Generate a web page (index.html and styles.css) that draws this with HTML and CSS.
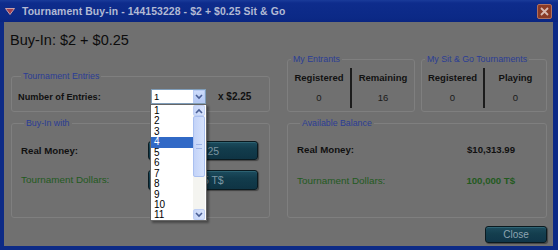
FILE: index.html
```html
<!DOCTYPE html>
<html>
<head>
<meta charset="utf-8">
<link rel="stylesheet" href="styles.css">
</head>
<body>
<div class="window">
  <div class="titlebar">
    <svg class="tb-icon" width="10" height="7" viewBox="0 0 10 7"><path d="M0.5 0.5 L9.5 0.5 L5 6.5 Z" fill="#a04050" stroke="#c8a0a8" stroke-width="1"/></svg>
    <span class="title">Tournament Buy-in - 144153228 - $2 + $0.25 Sit &amp; Go</span>
    <span class="x-btn"><svg width="9" height="9" viewBox="0 0 9 9"><path d="M1 1 L8 8 M8 1 L1 8" stroke="#d8b8b0" stroke-width="1.8"/></svg></span>
  </div>
  <div class="body">
    <div class="cols">
      <div class="col-left">
        <h1 class="buyin-title">Buy-In: $2 + $0.25</h1>
        <fieldset class="grp grp-entries">
          <legend>Tournament Entries</legend>
          <div class="entries-row">
            <span class="lbl-b lbl-entries">Number of Entries:</span>
            <div class="select">
              <span class="sel-value">1</span>
              <span class="sel-arrow"><svg width="8" height="6" viewBox="0 0 8 6"><path d="M1 1 L4 4 L7 1" fill="none" stroke="#4a5f95" stroke-width="1.6"/></svg></span>
              <div class="dd-list">
                <div class="dd-items">
                  <div class="dd-item">1</div>
                  <div class="dd-item">2</div>
                  <div class="dd-item">3</div>
                  <div class="dd-item dd-sel">4</div>
                  <div class="dd-item">5</div>
                  <div class="dd-item">6</div>
                  <div class="dd-item">7</div>
                  <div class="dd-item">8</div>
                  <div class="dd-item">9</div>
                  <div class="dd-item">10</div>
                  <div class="dd-item">11</div>
                </div>
                <div class="dd-scroll">
                  <span class="sb-btn"><svg width="8" height="6" viewBox="0 0 8 6"><path d="M1 5 L4 2 L7 5" fill="none" stroke="#4a5f95" stroke-width="1.6"/></svg></span>
                  <span class="sb-thumb"><span class="grip"></span></span>
                  <span class="sb-track"></span>
                  <span class="sb-btn"><svg width="8" height="6" viewBox="0 0 8 6"><path d="M1 1 L4 4 L7 1" fill="none" stroke="#4a5f95" stroke-width="1.6"/></svg></span>
                </div>
              </div>
            </div>
            <span class="lbl-b mult">x $2.25</span>
          </div>
        </fieldset>
        <fieldset class="grp grp-buyin">
          <legend>Buy-In with</legend>
          <div class="buyin-grid">
            <span class="lbl-b lbl-rm">Real Money:</span>
            <span class="tbtn tbtn-1">$2.25</span>
            <span class="lbl-g">Tournament Dollars:</span>
            <span class="tbtn tbtn-2">2.25 T$</span>
          </div>
        </fieldset>
      </div>
      <div class="col-right">
        <div class="stats-row">
          <fieldset class="grp grp-stats grp-entrants">
            <legend>My Entrants</legend>
            <div class="stat-cols">
              <div class="stat-col stat-first"><span class="stat-h">Registered</span><span class="stat-v">0</span></div>
              <div class="stat-col"><span class="stat-h">Remaining</span><span class="stat-v">16</span></div>
            </div>
          </fieldset>
          <fieldset class="grp grp-stats grp-sng">
            <legend>My Sit &amp; Go Tournaments</legend>
            <div class="stat-cols">
              <div class="stat-col stat-first"><span class="stat-h">Registered</span><span class="stat-v">0</span></div>
              <div class="stat-col"><span class="stat-h">Playing</span><span class="stat-v">0</span></div>
            </div>
          </fieldset>
        </div>
        <fieldset class="grp grp-balance">
          <legend>Available Balance</legend>
          <div class="bal-grid">
            <span class="lbl-b lbl-rm">Real Money:</span>
            <span class="lbl-b bal-v">$10,313.99</span>
            <span class="lbl-g">Tournament Dollars:</span>
            <span class="lbl-g bal-v bal-gb">100,000 T$</span>
          </div>
        </fieldset>
      </div>
    </div>
    <div class="footer">
      <span class="close-btn">Close</span>
    </div>
  </div>
</div>
</body>
</html>
```
FILE: styles.css
```css
* { box-sizing: border-box; }
html, body { margin: 0; padding: 0; background: #0c2a86; }
body { width: 558px; height: 250px; overflow: hidden; font-family: "Liberation Sans", Arial, sans-serif; }

.window { width: 558px; height: 250px; background: #0c2a86; }

.titlebar {
  height: 22px;
  display: flex;
  align-items: center;
  padding: 0 6px 0 5px;
  background: linear-gradient(#1a3b9a 0, #0e2c8c 3px, #0b2986 18px, #0a2580 22px);
}
.tb-icon { margin-right: 7px; flex: none; }
.title { color: #b2bad4; font-weight: bold; font-size: 10.4px; letter-spacing: 0.1px; flex: 1; white-space: nowrap; }
.x-btn {
  width: 15px; height: 15px;
  background: #8a3a26;
  border: 1px solid #b07060;
  border-radius: 2px;
  display: flex; align-items: center; justify-content: center;
}

.body {
  margin: 0 5px 0 4px;
  height: 224px;
  background: #707070;
}

.cols {
  display: grid;
  grid-template-columns: 259px 260px;
  column-gap: 17px;
  padding: 0 0 0 7px;
}

.buyin-title {
  margin: 8px 0 20px -1px;
  font-weight: normal;
  font-size: 14.5px;
  line-height: 20px;
  color: #0c0c0c;
}

.grp {
  margin: 0;
  padding: 0;
  min-inline-size: 0;
  border: 1px solid #7f7f7f;
  border-radius: 3px;
}
.grp legend {
  padding: 0 2px;
  margin-left: 3px;
  font-size: 8.8px;
  line-height: 12px;
  color: #2b3d95;
}

.lbl-b { font-weight: bold; font-size: 9.4px; color: #101010; line-height: 12px; white-space: nowrap; }
.lbl-g { font-size: 9.9px; color: #235a1e; line-height: 12px; white-space: nowrap; }
.lbl-rm { font-size: 9.7px; }

.grp-entries { height: 42px; padding: 7px 0 0 6px; }
.entries-row { display: flex; align-items: center; height: 15px; }
.lbl-entries { width: 133px; font-size: 9.2px; }
.mult { margin-left: 12px; font-size: 10px; }

.select {
  position: relative;
  width: 55px; height: 15px;
  background: #fff;
  border: 1px solid #7f9db9;
  display: flex; align-items: center;
  z-index: 10;
}
.sel-value { flex: 1; padding-left: 2px; font-size: 9.5px; color: #000; line-height: 12px; }
.sel-arrow {
  width: 12px; height: 13px; margin-right: 0;
  background: linear-gradient(#cddcfb, #b4c8f4);
  border: 1px solid #b8cbf3;
  display: flex; align-items: center; justify-content: center;
}

.dd-list {
  position: absolute;
  left: -2px; top: 14px;
  width: 57px; height: 117px;
  background: #fff;
  border: 1px solid #666;
  box-shadow: 2px 2px 2px rgba(0,0,0,0.35);
  display: flex;
}
.dd-items { flex: 1; padding-top: 1px; }
.dd-item { height: 10.45px; line-height: 10.45px; font-size: 10px; padding-left: 3px; color: #000; }
.dd-sel { background: #3169c6; color: #fff; }
.dd-scroll {
  width: 12px;
  margin-right: 1px;
  display: flex; flex-direction: column;
  background: #f4f4f0;
}
.sb-btn {
  height: 11px; flex: none;
  background: linear-gradient(90deg, #c6d5f8, #d8e3fb);
  border: 1px solid #c0d0f4;
  border-radius: 2px;
  display: flex; align-items: center; justify-content: center;
}
.sb-thumb {
  height: 61px; flex: none;
  background: linear-gradient(90deg, #c3d3f8, #d6e2fc);
  border: 1px solid #aac0f0;
  border-radius: 2px;
  display: flex; align-items: center; justify-content: center;
}
.grip { width: 6px; height: 5px; border-top: 1px solid #9fb4e6; border-bottom: 1px solid #9fb4e6; }
.sb-track { flex: 1; }

.grp-buyin { height: 101px; margin-top: 5px; padding: 12px 0 0 9px; }
.buyin-grid {
  display: grid;
  grid-template-columns: 127px 110px;
  grid-template-rows: 19px 20px;
  row-gap: 10px;
  align-items: center;
}
.tbtn {
  height: 100%;
  display: flex; align-items: center; justify-content: center;
  padding-left: 6px;
  background: linear-gradient(#1c4c5e, #123c4c 40%, #0f3444);
  border: 1px solid #0a1a20;
  border-radius: 3px;
  box-shadow: inset 0 1px 0 #2d6272, 1px 1px 1px rgba(0,0,0,0.4);
  color: #7c97a4;
  font-size: 10.5px;
}

.col-right { padding-top: 31px; }
.stats-row { display: flex; gap: 6px; }
.grp-stats { height: 59px; }
.grp-entrants { width: 128px; }
.grp-sng { width: 126px; }
.stat-cols { display: flex; margin-top: 3px; }
.stat-col { flex: 1; display: flex; flex-direction: column; align-items: center; gap: 8px; padding: 4px 0; }
.stat-first { border-right: 2px solid #1c1c1c; }
.stat-h { font-weight: bold; font-size: 9.5px; line-height: 12px; color: #121212; }
.stat-v { font-size: 9.5px; line-height: 12px; color: #1a1a1a; }

.grp-balance { height: 101px; margin-top: 5px; padding: 15px 31px 0 9px; }
.bal-grid {
  display: grid;
  grid-template-columns: 1fr auto;
  row-gap: 19px;
}
.bal-v { text-align: right; font-size: 9.6px; }
.bal-gb { font-weight: bold; }

.footer { display: flex; justify-content: flex-end; padding: 8px 6px 0 0; }
.close-btn {
  width: 62px; height: 17px;
  display: flex; align-items: center; justify-content: center;
  background: linear-gradient(#1d4c5e, #143e4e 45%, #10364a);
  border: 1px solid #0a1a20;
  border-radius: 3px;
  box-shadow: inset 0 1px 0 #2f6474, 1px 1px 1px rgba(0,0,0,0.4);
  color: #8ea4b2;
  font-size: 10px;
}
```
